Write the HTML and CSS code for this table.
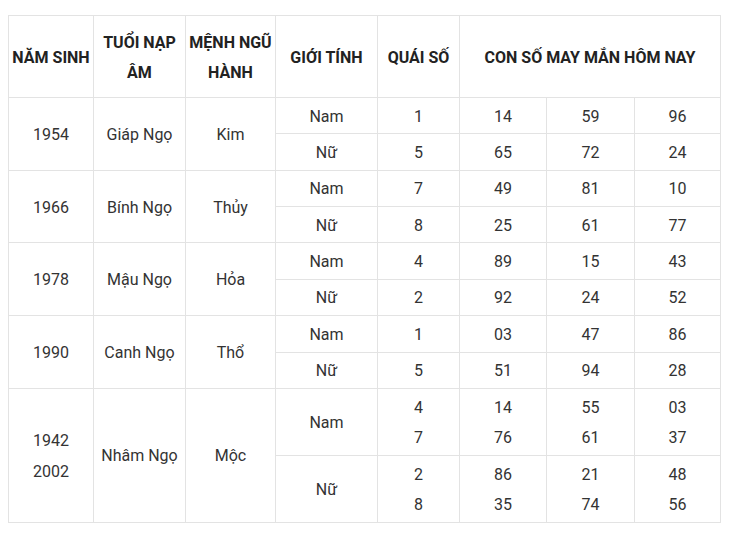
FILE: index.html
```html
<!DOCTYPE html>
<html lang="vi">
<head>
<meta charset="utf-8">
<link rel="stylesheet" href="styles.css">
</head>
<body>
<div class="wrap">
<table class="lucky">
  <colgroup>
    <col class="c1"><col class="c2"><col class="c3"><col class="c4"><col class="c5"><col class="c6"><col class="c7"><col class="c8">
  </colgroup>
  <thead>
    <tr>
      <th>NĂM SINH</th>
      <th>TUỔI NẠP ÂM</th>
      <th>MỆNH NGŨ HÀNH</th>
      <th>GIỚI TÍNH</th>
      <th>QUÁI SỐ</th>
      <th colspan="3">CON SỐ MAY MẮN HÔM NAY</th>
    </tr>
  </thead>
  <tbody>
    <tr><td rowspan="2">1954</td><td rowspan="2">Giáp Ngọ</td><td rowspan="2">Kim</td><td>Nam</td><td>1</td><td>14</td><td>59</td><td>96</td></tr>
    <tr><td>Nữ</td><td>5</td><td>65</td><td>72</td><td>24</td></tr>
    <tr><td rowspan="2">1966</td><td rowspan="2">Bính Ngọ</td><td rowspan="2">Thủy</td><td>Nam</td><td>7</td><td>49</td><td>81</td><td>10</td></tr>
    <tr><td>Nữ</td><td>8</td><td>25</td><td>61</td><td>77</td></tr>
    <tr><td rowspan="2">1978</td><td rowspan="2">Mậu Ngọ</td><td rowspan="2">Hỏa</td><td>Nam</td><td>4</td><td>89</td><td>15</td><td>43</td></tr>
    <tr><td>Nữ</td><td>2</td><td>92</td><td>24</td><td>52</td></tr>
    <tr><td rowspan="2">1990</td><td rowspan="2">Canh Ngọ</td><td rowspan="2">Thổ</td><td>Nam</td><td>1</td><td>03</td><td>47</td><td>86</td></tr>
    <tr><td>Nữ</td><td>5</td><td>51</td><td>94</td><td>28</td></tr>
    <tr><td rowspan="2">1942<br>2002</td><td rowspan="2">Nhâm Ngọ</td><td rowspan="2">Mộc</td><td>Nam</td><td>4<br>7</td><td>14<br>76</td><td>55<br>61</td><td>03<br>37</td></tr>
    <tr><td>Nữ</td><td>2<br>8</td><td>86<br>35</td><td>21<br>74</td><td>48<br>56</td></tr>
  </tbody>
</table>
</div>
</body>
</html>
```
FILE: styles.css
```css
html, body {
  margin: 0;
  padding: 0;
  background: #fff;
}
.wrap {
  padding: 15px 8px 0 8px;
}
.lucky {
  border-collapse: collapse;
  table-layout: fixed;
  width: 713px;
  font-family: Roboto, "Liberation Sans", sans-serif;
  font-size: 16px;
  color: #333;
}
.c1 { width: 85px; }
.c2 { width: 92px; }
.c3 { width: 90px; }
.c4 { width: 102px; }
.c5 { width: 82px; }
.c6 { width: 87px; }
.c7 { width: 88px; }
.c8 { width: 86px; }
.lucky th,
.lucky td {
  border: 1px solid #e3e3e3;
  text-align: center;
  vertical-align: middle;
  padding: 3.6px 2px 1.2px;
  line-height: 30.6px;
}
.lucky th {
  font-weight: 700;
  color: #222;
  padding: 11.9px 1px 7.9px;
}
```
